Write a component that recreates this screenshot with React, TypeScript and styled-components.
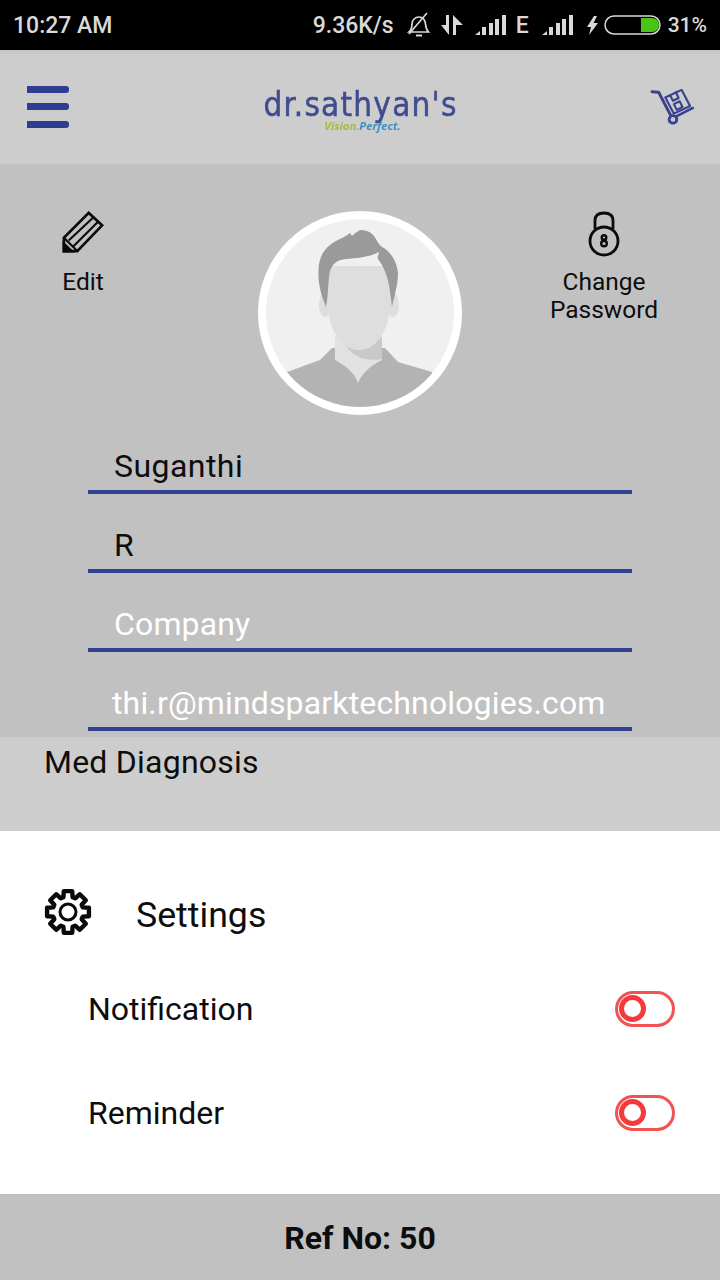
import styled, { createGlobalStyle } from "styled-components";

const GlobalStyle = createGlobalStyle`
  html, body {
    margin: 0;
    padding: 0;
    background: #c1c1c1;
    font-family: Roboto, "Liberation Sans", sans-serif;
  }
  * { box-sizing: border-box; }
`;

const Page = styled.div`
  width: 720px;
  height: 1280px;
  display: flex;
  flex-direction: column;
  overflow: hidden;
`;

/* status bar */
const StatusBar = styled.div`
  height: 50px;
  background: #000;
  color: #d9d9d9;
  display: flex;
  align-items: center;
  padding: 0 13px;
  font-size: 23px;
  font-weight: 500;
`;

const StatusTime = styled.span`
  flex: 1;
`;

const StatusItem = styled.span<{ $left?: number; $size?: number }>`
  display: flex;
  align-items: center;
  margin-left: ${(p) => p.$left ?? 0}px;
  font-size: ${(p) => p.$size ?? 23}px;
`;

/* header */
const Header = styled.header`
  height: 114px;
  background: linear-gradient(#c4c4c4 0, #cdcdcd 5px);
  display: grid;
  grid-template-columns: 1fr auto 1fr;
  align-items: center;
  padding: 0 26px 0 27px;
`;

const Burger = styled.div`
  width: 42px;
  display: flex;
  flex-direction: column;
  gap: 10.5px;
  margin-top: -1px;
`;

const BurgerBar = styled.span`
  display: block;
  height: 7px;
  background: #2f3c90;
  border-radius: 0 3px 3px 0;
`;

const Logo = styled.div`
  display: flex;
  flex-direction: column;
  align-items: center;
  margin-top: 5px;
`;

const LogoName = styled.div`
  font-family: "DejaVu Sans Condensed", "DejaVu Sans", sans-serif;
  font-size: 33px;
  line-height: 33px;
  letter-spacing: 1.2px;
  color: #3f4c90;
  -webkit-text-stroke: 0.5px #3f4c90;
  filter: blur(0.5px);
`;

const Tagline = styled.div`
  font-family: "Open Sans", sans-serif;
  font-size: 11.2px;
  line-height: 10px;
  font-weight: 700;
  font-style: italic;
  margin-left: 4px;
  filter: blur(0.3px);
`;

const TagGreen = styled.span`
  color: #a4bc3c;
`;

const TagBlue = styled.span`
  color: #3f8fc0;
`;

const CartSlot = styled.div`
  justify-self: end;
  display: flex;
`;

/* profile */
const Profile = styled.section`
  height: 573px;
  background: #c1c1c1;
  padding-top: 47px;
`;

const ProfileTop = styled.div`
  display: grid;
  grid-template-columns: 258px 204px 258px;
  align-items: start;
`;

const Action = styled.div<{ $width: number; $end?: boolean }>`
  width: ${(p) => p.$width}px;
  justify-self: ${(p) => (p.$end ? "end" : "start")};
  display: flex;
  flex-direction: column;
  align-items: center;
  text-align: center;
  color: #0d0d0d;
  font-size: 24.5px;
  line-height: 28px;
`;

const ActionIcon = styled.div`
  height: 46px;
  margin-bottom: 11px;
  display: flex;
  align-items: flex-start;
`;

const Avatar = styled.div`
  width: 204px;
  height: 204px;
  border-radius: 50%;
  border: 8px solid #fff;
  background: #f0f0f0;
  overflow: hidden;
`;

const Fields = styled.div`
  margin: 0 88px;
`;

const Field = styled.div<{ $light?: boolean; $pad?: number; $track?: number }>`
  height: 79px;
  border-bottom: 4px solid #333f8f;
  padding: 29px 0 0 ${(p) => p.$pad ?? 26}px;
  font-size: 32px;
  letter-spacing: ${(p) => p.$track ?? 0.15}px;
  line-height: 44px;
  white-space: nowrap;
  color: ${(p) => (p.$light ? "#fff" : "#0d0d0d")};
`;

const Diagnosis = styled.div`
  height: 94px;
  background: #cdcdcd;
  padding: 4px 0 0 44px;
  font-size: 32px;
  letter-spacing: 0.23px;
  line-height: 42px;
  color: #0d0d0d;
`;

/* settings */
const Settings = styled.section`
  height: 363px;
  background: #fff;
  padding-top: 40px;
  color: #0d0d0d;
`;

const SettingsHead = styled.div`
  height: 86px;
  padding: 2px 0 0 44px;
  display: flex;
  align-items: center;
  gap: 44px;
  font-size: 35.7px;
`;

const GearSlot = styled.div`
  display: flex;
  margin-top: -6px;
`;

const SwitchRow = styled.div`
  height: 104px;
  padding: 0 45px 0 88px;
  display: flex;
  align-items: center;
  justify-content: space-between;
  font-size: 32px;
`;

const Toggle = styled.div`
  width: 60px;
  height: 36px;
  margin-top: -1px;
  border: 3px solid #f25252;
  border-radius: 18px;
  display: flex;
  align-items: center;
  padding-left: 1px;
`;

const ToggleThumb = styled.span`
  width: 27px;
  height: 27px;
  border-radius: 50%;
  border: 5.5px solid #f23c3c;
  background: #fff;
`;

const Footer = styled.footer`
  height: 86px;
  background: #c1c1c1;
  display: flex;
  align-items: center;
  justify-content: center;
  padding-top: 2px;
  font-size: 32px;
  font-weight: 700;
  color: #0d0d0d;
`;

/* drawings */
const BellOff = () => (
  <svg width="24" height="26" viewBox="0 0 24 26" fill="none" stroke="#d9d9d9" strokeWidth="1.7">
    <path d="M2 20c2.500-2 3-4 3-8 0-4 3-7 7-7s6 3 6.500 7c.3 4 1 6 3 8z" />
    <path d="M9 23.500h6" strokeWidth="2" />
    <path d="M2 22L20 1" />
  </svg>
);

const DataArrows = () => (
  <svg width="22" height="20" viewBox="0 0 22 20" fill="#d9d9d9">
    <path d="M0 10h5V0h3v20z" />
    <path d="M12 0v20h3V10h7z" />
  </svg>
);

const Signal = () => (
  <svg width="31" height="20" viewBox="0 0 31 20" fill="#d9d9d9">
    <path d="M0 20l5-4v4z" />
    <rect x="7" y="12" width="4" height="8" />
    <rect x="14" y="8" width="4" height="12" />
    <rect x="20" y="4" width="4" height="16" />
    <rect x="27" y="0" width="4" height="20" />
  </svg>
);

const Bolt = () => (
  <svg width="11" height="19" viewBox="0 0 11 19" fill="#d9d9d9">
    <path d="M7 0L0 11h4l-2 8 9-12H6.500L10 0z" />
  </svg>
);

const Battery = () => (
  <svg width="57" height="20" viewBox="0 0 57 20" fill="none">
    <rect x="1" y="1" width="55" height="18" rx="9" stroke="#d9d9d9" strokeWidth="1.500" />
    <path d="M37 3h11a7 7 0 010 14H37z" fill="#4cc417" />
  </svg>
);

const Cart = () => (
  <svg width="44" height="40" viewBox="0 0 46 42" fill="none" stroke="#37418f" strokeWidth="2.200" strokeLinejoin="round" strokeLinecap="round">
    <path d="M2 5l7 .500 13 25" strokeWidth="3" />
    <circle cx="24" cy="34" r="4" strokeWidth="3" />
    <path d="M27 31l18-9" strokeWidth="2.600" />
    <path d="M16 11L33 3l9 17-17 8z" />
    <path d="M21 8.500l3 6 6-3-3-6" />
    <path d="M25 18l6-3 3 6-6 3z" />
  </svg>
);

const Pencil = () => (
  <svg width="42" height="42" viewBox="0 0 44 44" fill="none" stroke="#0a0a0a" strokeWidth="2.800" strokeLinejoin="miter">
    <path d="M2 28L28 2l14 13-26 27H2z" />
    <path d="M2 28l14 14" strokeWidth="2.200" />
    <path d="M7 31L33 6.500M12 37L38 11" strokeWidth="2.200" />
    <path d="M2 34.500V42h8z" fill="#0a0a0a" />
  </svg>
);

const Lock = () => (
  <svg width="34" height="46" viewBox="0 0 34 46" fill="none" stroke="#0a0a0a" strokeWidth="2.800">
    <path d="M8 18V9.500C8 4.500 11 2 17 2s9 2.500 9 7.500V18" />
    <circle cx="17" cy="30" r="14" />
    <circle cx="17" cy="26.500" r="2.300" strokeWidth="2.400" />
    <circle cx="17" cy="32.500" r="2.800" strokeWidth="2.400" />
  </svg>
);

// eight toothed gear outline
const gearPath = () => {
  const pts: string[] = [];
  for (let i = 0; i < 8; i++) {
    const a = (i * Math.PI) / 4;
    const at = (r: number, d: number) => {
      const x = 24 + r * Math.cos(a + d);
      const y = 24 + r * Math.sin(a + d);
      return `${x.toFixed(1)} ${y.toFixed(1)}`;
    };
    pts.push(at(15.5, -0.3), at(21.3, -0.2), at(21.3, 0.2), at(15.5, 0.3));
  }
  return `M${pts.join("L")}Z`;
};

const Gear = () => (
  <svg width="48" height="48" viewBox="0 0 48 48" fill="none" stroke="#0a0a0a">
    <path d={gearPath()} strokeWidth="4.400" strokeLinejoin="round" />
    <circle cx="24" cy="24" r="8" strokeWidth="3" />
  </svg>
);

const Person = () => (
  <svg width="188" height="188" viewBox="8 8 188 188">
    <path d="M29 161l33-12 12-12h53l13 14 34 10v40H29z" fill="#b3b3b3" />
    <path d="M77 125h47v24c-12 6-20 13-24 23-3-10-12-17-23-23z" fill="#e2e2e2" />
    <path d="M86 132c12 5 26 3 38-6v22c-16 3-30-2-38-16z" fill="#c9c9c9" />
    <ellipse cx="67" cy="94" rx="6" ry="12" fill="#dedede" />
    <ellipse cx="135" cy="94" rx="6" ry="12" fill="#dedede" />
    <path d="M70 55h62v40c-1 25-14 44-31 44S71 120 70 95z" fill="#dedede" />
    <path d="M68 96C64 86 60 74 60.500 62 60 50 64 40 72 34c6-5 14-7 20-12l2 3c3-3 6-5 8-6 6 0 11 2 14 6 3 4 4 8 8 11 8 4 15 14 16 26 0 12-4 24-6 34-2-16-3-34-14-48-1-3 1-4 1-7-9 5-21 6-33 7-12 1-16 8-17 18-1 10-1 20-3 30z" fill="#9a9a9a" />
  </svg>
);

export default function App() {
  return (
    <Page>
      <GlobalStyle />
      <StatusBar>
        <StatusTime>10:27 AM</StatusTime>
        <StatusItem>9.36K/s</StatusItem>
        <StatusItem $left={13}><BellOff /></StatusItem>
        <StatusItem $left={10}><DataArrows /></StatusItem>
        <StatusItem $left={12}><Signal /></StatusItem>
        <StatusItem $left={10}>E</StatusItem>
        <StatusItem $left={13}><Signal /></StatusItem>
        <StatusItem $left={14}><Bolt /></StatusItem>
        <StatusItem $left={6}><Battery /></StatusItem>
        <StatusItem $left={7} $size={21}>31%</StatusItem>
      </StatusBar>

      <Header>
        <Burger>
          <BurgerBar />
          <BurgerBar />
          <BurgerBar />
        </Burger>
        <Logo>
          <LogoName>dr.sathyan's</LogoName>
          <Tagline>
            <TagGreen>Vision.</TagGreen>
            <TagBlue>Perfect.</TagBlue>
          </Tagline>
        </Logo>
        <CartSlot><Cart /></CartSlot>
      </Header>

      <Profile>
        <ProfileTop>
          <Action $width={166}>
            <ActionIcon><Pencil /></ActionIcon>
            Edit
          </Action>
          <Avatar><Person /></Avatar>
          <Action $width={232} $end>
            <ActionIcon><Lock /></ActionIcon>
            Change
            <br />
            Password
          </Action>
        </ProfileTop>
        <Fields>
          <Field $track={0.45}>Suganthi</Field>
          <Field>R</Field>
          <Field $light>Company</Field>
          <Field $light $pad={24}>thi.r@mindsparktechnologies.com</Field>
        </Fields>
      </Profile>

      <Diagnosis>Med Diagnosis</Diagnosis>

      <Settings>
        <SettingsHead>
          <GearSlot><Gear /></GearSlot>
          Settings
        </SettingsHead>
        <SwitchRow>
          Notification
          <Toggle><ToggleThumb /></Toggle>
        </SwitchRow>
        <SwitchRow>
          Reminder
          <Toggle><ToggleThumb /></Toggle>
        </SwitchRow>
      </Settings>

      <Footer>Ref No: 50</Footer>
    </Page>
  );
}
